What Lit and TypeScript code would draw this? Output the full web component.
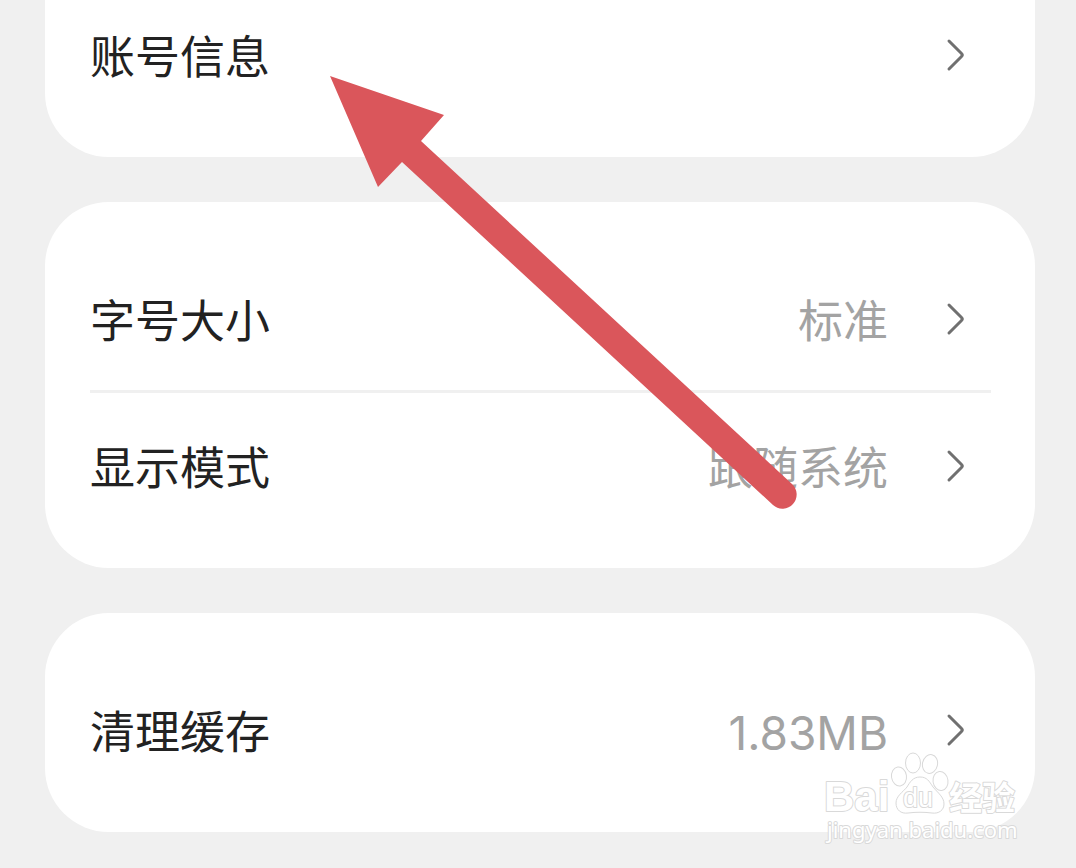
import { LitElement, html, css, svg, nothing } from "lit";
import { customElement, property } from "lit/decorators.js";

interface Setting {
  label: string;
  value?: string;
}

const groups: Setting[][] = [
  [{ label: "账号信息" }],
  [
    { label: "字号大小", value: "标准" },
    { label: "显示模式", value: "跟随系统" },
  ],
  [{ label: "清理缓存", value: "1.83MB" }],
];

@customElement("setting-row")
class SettingRow extends LitElement {
  @property() label = "";
  @property() value = "";

  static styles = css`
    :host {
      display: block;
    }
    .row {
      display: flex;
      align-items: center;
      box-sizing: border-box;
      width: 100%;
      height: 147px;
      padding: 0;
      border: 0;
      background: none;
      font: inherit;
      color: #222;
      text-align: left;
      cursor: pointer;
    }
    .label,
    .value {
      padding-top: 4px;
    }
    .label {
      flex: 1;
    }
    .value {
      color: #a3a3a3;
    }
    .numeric {
      font-size: 46px;
    }
    .chevron {
      width: 60px;
      height: 36px;
      margin-left: 43px;
      fill: none;
      stroke: #707070;
      stroke-width: 3;
      stroke-linecap: round;
      stroke-linejoin: round;
    }
  `;

  render() {
    const numeric = /^\d/.test(this.value) ? "numeric" : "";
    return html`
      <button class="row" type="button">
        <span class="label">${this.label}</span>
        ${this.value
          ? html`<span class="value ${numeric}">${this.value}</span>`
          : nothing}
        <svg class="chevron" viewBox="0 0 60 36" aria-hidden="true">
          <path d="M18 3 L30.500 15.500 Q32 17 30.500 18.500 L18 31" />
        </svg>
      </button>
    `;
  }
}

@customElement("site-watermark")
class SiteWatermark extends LitElement {
  static styles = css`
    :host {
      display: block;
    }
    .mark {
      display: block;
      width: 200px;
      height: 96px;
      fill: #fff;
      stroke: #d9d9d9;
      stroke-width: 1;
    }
    .text {
      paint-order: stroke;
      stroke-width: 2;
      stroke-linejoin: round;
    }
    .latin {
      font: bold 42px "Liberation Sans", sans-serif;
    }
    .du {
      font: 27px "Liberation Sans", sans-serif;
    }
    .han {
      font: bold 33px "Noto Sans CJK SC", sans-serif;
    }
    .url {
      font: 22px "Noto Sans", sans-serif;
    }
  `;

  render() {
    return html`
      <svg class="mark" viewBox="0 0 200 96" role="img" aria-label="Baidu 经验">
        ${svg`
          <ellipse cx="76" cy="26.500" rx="7.500" ry="9.500" transform="rotate(-8 76 26.500)" />
          <ellipse cx="90" cy="13" rx="7.500" ry="10" />
          <ellipse cx="107" cy="14" rx="7.500" ry="9.500" transform="rotate(12 107 14)" />
          <ellipse cx="117.500" cy="31" rx="7.500" ry="9.500" transform="rotate(-8 117.500 31)" />
          <path d="M97 27 C90 27 87 32 84 37 C80 42 73 46 73 53 C73 60 78 64 85 63 C93 62 101 62 109 63 C116 64 121 60 121 54 C121 47 115 43 110 37 C106 31 104 27 97 27 Z" />
          <text class="text latin" x="1" y="61">Bai</text>
          <text class="text du" x="80" y="57">du</text>
          <text class="text han" x="126" y="60">经验</text>
          <text class="text url" x="4" y="88">jingyan.baidu.com</text>
        `}
      </svg>
    `;
  }
}

@customElement("app-root")
class AppRoot extends LitElement {
  static styles = css`
    :host {
      display: block;
      position: relative;
      box-sizing: border-box;
      min-height: 100vh;
      overflow: hidden;
      background: #f0f0f0;
      font-family: Inter, "Noto Sans CJK SC", sans-serif;
      font-size: 45px;
      line-height: 60px;
    }
    .list {
      display: flex;
      flex-direction: column;
      gap: 45px;
      margin-top: -62px;
      padding: 0 41px 36px 45px;
    }
    .card {
      padding: 44px 44px 28px 45px;
      border-radius: 64px;
      background: #fff;
    }
    .divided {
      box-shadow: 0 -3px #f0f0f0;
    }
    .arrow {
      position: absolute;
      left: 330px;
      top: 76px;
      width: 467px;
      height: 433px;
      fill: #da565b;
      pointer-events: none;
    }
    .watermark {
      position: absolute;
      right: 53px;
      bottom: 22px;
      pointer-events: none;
    }
  `;

  render() {
    return html`
      <main class="list">
        ${groups.map(
          (rows) => html`
            <section class="card">
              ${rows.map(
                (row, i) => html`
                  <setting-row
                    class=${i > 0 ? "divided" : ""}
                    .label=${row.label}
                    .value=${row.value ?? ""}
                  ></setting-row>
                `
              )}
            </section>
          `
        )}
      </main>
      <svg class="arrow" viewBox="0 0 467 433" aria-hidden="true">
        <path
          d="M0 0 L114 39 L91 65 L462 408 A14 14 0 0 1 443 429 L72 86 L48 111 Z"
        />
      </svg>
      <site-watermark class="watermark"></site-watermark>
    `;
  }
}
